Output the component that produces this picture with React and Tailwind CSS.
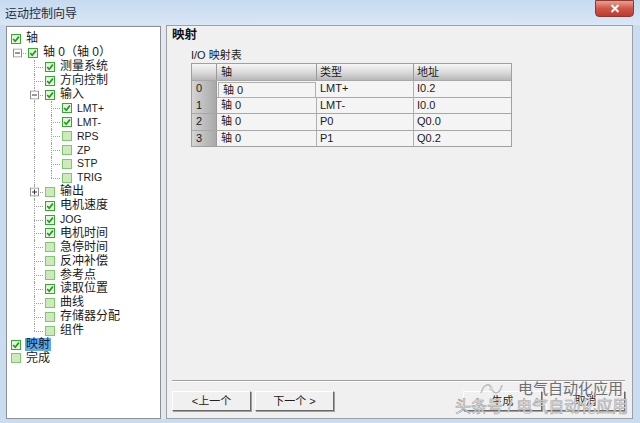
import React from "react";

const tree = [
  { t: "轴", l: 0, c: true },
  { t: "轴 0（轴 0）", l: 1, c: true, exp: "-" },
  { t: "测量系统", l: 2, c: true },
  { t: "方向控制", l: 2, c: true },
  { t: "输入", l: 2, c: true, exp: "-" },
  { t: "LMT+", l: 3, c: true },
  { t: "LMT-", l: 3, c: true },
  { t: "RPS", l: 3 },
  { t: "ZP", l: 3 },
  { t: "STP", l: 3 },
  { t: "TRIG", l: 3, last: true },
  { t: "输出", l: 2, exp: "+" },
  { t: "电机速度", l: 2, c: true },
  { t: "JOG", l: 2, c: true },
  { t: "电机时间", l: 2, c: true },
  { t: "急停时间", l: 2 },
  { t: "反冲补偿", l: 2 },
  { t: "参考点", l: 2 },
  { t: "读取位置", l: 2, c: true },
  { t: "曲线", l: 2 },
  { t: "存储器分配", l: 2 },
  { t: "组件", l: 2, last: true },
  { t: "映射", l: 0, c: true, sel: true },
  { t: "完成", l: 0 },
];

const rows = [
  ["0", "轴 0", "LMT+", "I0.2"],
  ["1", "轴 0", "LMT-", "I0.0"],
  ["2", "轴 0", "P0", "Q0.0"],
  ["3", "轴 0", "P1", "Q0.2"],
];

const CheckBox = ({ checked }) => (
  <svg width="10" height="10" viewBox="0 0 10 10" className="shrink-0">
    <rect x="0.5" y="0.5" width="9" height="9" fill={checked ? "#e4f5d8" : "#cdeabb"} stroke={checked ? "#35a935" : "#7fc772"} />
    {checked && <path d="M2.2 5 L4.2 7.2 L7.9 2.6" fill="none" stroke="#26962a" strokeWidth="1.7" />}
  </svg>
);

const Expander = ({ sign }) => (
  <svg width="9" height="9" viewBox="0 0 9 9" className="absolute left-[4px] top-1/2 -translate-y-1/2">
    <rect x="0.5" y="0.5" width="8" height="8" fill="#fff" stroke="#8d8d8d" />
    <path d="M2 4.5 H7" stroke="#333" />
    {sign === "+" && <path d="M4.5 2 V7" stroke="#333" />}
  </svg>
);

const TreeRow = ({ item }) => {
  const cells = [];
  for (let i = 0; i < item.l; i++) {
    if (i === item.l - 1) {
      cells.push(
        <div key={i} className="relative w-[17px] self-stretch shrink-0">
          {item.l >= 2 && (
            <div
              className={`absolute left-[8px] top-0 border-l border-dotted border-[#a0a0a0] ${item.last ? "h-1/2" : "h-full"}`}
            />
          )}
          <div className="absolute left-[8px] right-0 top-1/2 border-t border-dotted border-[#a0a0a0]" />
          {item.exp && <Expander sign={item.exp} />}
        </div>
      );
    } else {
      cells.push(
        <div key={i} className="relative w-[17px] self-stretch shrink-0">
          {item.l === 3 && i === 1 && (
            <div className="absolute left-[8px] top-0 h-full border-l border-dotted border-[#a0a0a0]" />
          )}
        </div>
      );
    }
  }
  return (
    <div className="flex h-[13.9px] items-center">
      {cells}
      <div className="ml-[2px] flex items-center">
        <CheckBox checked={item.c} />
      </div>
      <span
        className={`ml-[4px] px-[1px] leading-[13px] whitespace-nowrap ${
          /^[A-Z]/.test(item.t) ? "text-[10.5px]" : "text-[12px]"
        } ${item.sel ? "bg-[#5fa9ea] text-[#0d1d33]" : "text-[#1a1a1a]"}`}
      >
        {item.t}
      </span>
    </div>
  );
};

const Btn = ({ children, className = "" }) => (
  <div
    className={`flex h-[20px] w-[79px] items-center justify-center border border-t-white border-l-white border-b-[#6a6a6a] border-r-[#6a6a6a] bg-[#f0f0f0] text-[11px] text-[#222] shadow-[1px_1px_0_#a0a0a0] ${className}`}
  >
    {children}
  </div>
);

export default function App() {
  return (
    <div className="relative flex h-[423px] w-[640px] flex-col overflow-hidden bg-[#c9dcf0] font-['Liberation_Sans','Noto_Sans_CJK_SC',sans-serif]">
      {/* title bar */}
      <div className="flex h-[25px] shrink-0 items-start bg-gradient-to-b from-[#c6daf0] to-[#d9e7f6]">
        <span className="ml-[5px] mt-[5px] text-[12px] text-[#1e2a3a]">运动控制向导</span>
        <div className="ml-auto mr-[6px] flex h-[17px] w-[39px] items-center justify-center rounded-b-[4px] border border-[#8a3a30] bg-gradient-to-b from-[#e8a090] via-[#d0554a] to-[#c0392b]">
          <svg width="10" height="9" viewBox="0 0 10 9">
            <path d="M1.5 1 L8.5 8 M8.5 1 L1.5 8" stroke="#fff" strokeWidth="2" />
          </svg>
        </div>
      </div>

      {/* body */}
      <div className="flex min-h-0 flex-1 pb-[4px] pl-[6px] pr-[7px]">
        {/* tree */}
        <div className="mt-[1px] w-[155px] shrink-0 border border-[#8c9198] bg-white pl-[2px] pt-[5px]">
          {tree.map((item, i) => (
            <TreeRow key={i} item={item} />
          ))}
        </div>

        <div className="w-[5px] shrink-0 bg-[#e4e8ee]" />

        {/* right panel */}
        <div className="flex flex-1 flex-col border border-[#9aa0a8] bg-[#f0f0f0] pl-[5px] pr-[7px] pb-[7px]">
          <div className="mt-[2px] text-[12.5px] font-bold leading-[14px] text-[#111]">映射</div>
          <div className="ml-[19px] mt-[7px] text-[11px] leading-[12px] text-[#222]">I/O 映射表</div>

          <div className="ml-[19px] mt-[2px] w-[321px] border border-[#a0a0a0] bg-[#f4f4f4] text-[11px] text-[#1a1a1a]">
            <div className="grid h-[16px] grid-cols-[25px_100px_97px_97px] bg-gradient-to-b from-[#f6f6f6] via-[#dcdcdc] to-[#b8b8b8]">
              <div className="border-r border-[#9a9a9a]" />
              <div className="border-r border-[#9a9a9a] pl-[4px] leading-[16px]">轴</div>
              <div className="border-r border-[#9a9a9a] pl-[3px] leading-[16px]">类型</div>
              <div className="pl-[3px] leading-[16px]">地址</div>
            </div>
            {rows.map((r, i) => (
              <div key={i} className="grid h-[16.5px] grid-cols-[25px_100px_97px_97px] border-t border-[#a8a8a8]">
                <div className="border-r border-[#9a9a9a] bg-gradient-to-r from-[#d4d4d4] to-[#a9a9a9] pl-[4px] leading-[15px]">
                  {r[0]}
                </div>
                <div className={`border-r border-[#b0b0b0] pl-[4px] leading-[14px] ${i === 0 ? "m-[1px] border border-[#333]" : ""}`}>
                  {r[1]}
                </div>
                <div className="border-r border-[#b0b0b0] pl-[3px] leading-[15px]">{r[2]}</div>
                <div className="pl-[3px] leading-[15px]">{r[3]}</div>
              </div>
            ))}
          </div>

          <div className="flex-1" />

          <div className="border-t border-b border-t-[#a0a0a0] border-b-white" />
          <div className="mt-[9px] flex items-center">
            <Btn>&lt;上一个</Btn>
            <Btn className="ml-[4px]">下一个 &gt;</Btn>
            <Btn className="ml-auto">生成</Btn>
            <Btn className="ml-[4px]">取消</Btn>
          </div>
        </div>
      </div>

      {/* watermark */}
      <div className="absolute left-[478px] top-[381px] flex items-center gap-[14px] text-[15px] leading-[16px] text-[#6f6f6f]">
        <svg width="26" height="16" viewBox="0 0 26 16">
          <path d="M3 12 C6 2 12 2 14 8 C16 14 22 13 24 4" fill="none" stroke="#bdbdbd" strokeWidth="1.5" />
          <circle cx="13" cy="8" r="2" fill="#d8d8d8" />
        </svg>
        <span>电气自动化应用</span>
      </div>
      <div className="absolute left-[455px] top-[398px] text-[16px] leading-[17px] text-white [-webkit-text-stroke:0.6px_#9a9a9a]">
        头条号 / 电气自动化应用
      </div>
    </div>
  );
}
